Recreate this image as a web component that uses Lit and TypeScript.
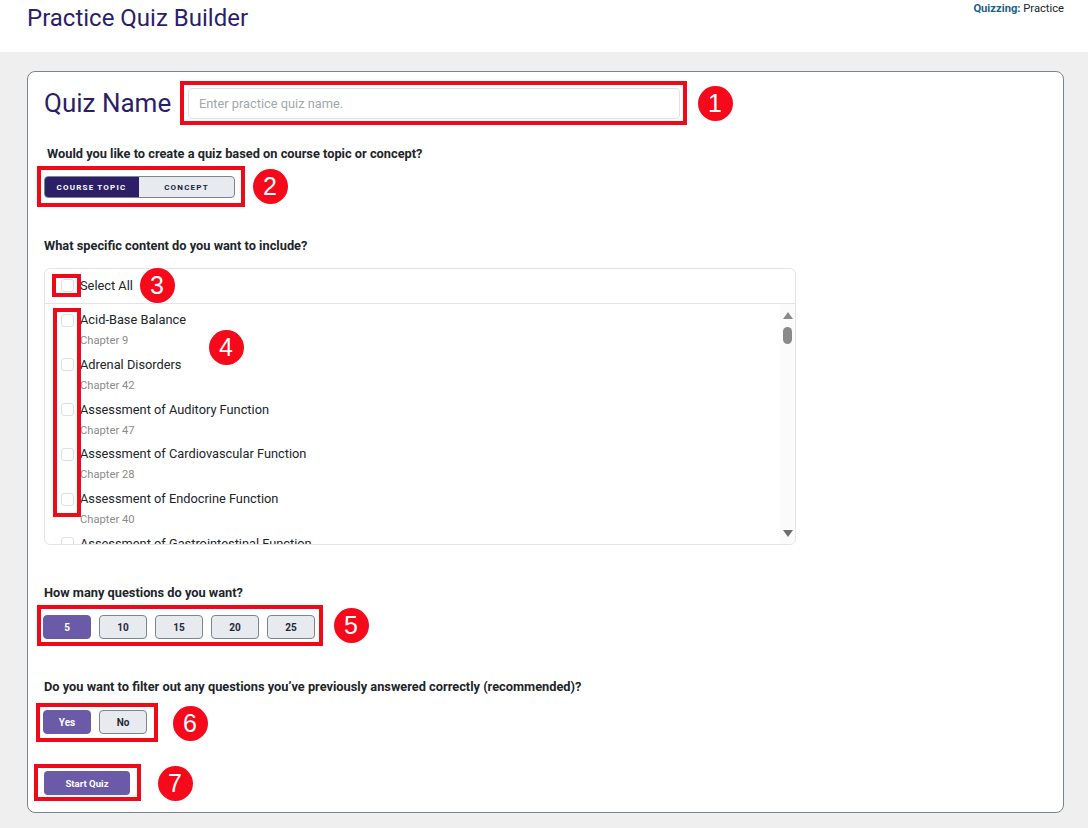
import { LitElement, html, css } from "lit";
import { customElement } from "lit/decorators.js";

const topics = [
  ["Acid-Base Balance", "Chapter 9"],
  ["Adrenal Disorders", "Chapter 42"],
  ["Assessment of Auditory Function", "Chapter 47"],
  ["Assessment of Cardiovascular Function", "Chapter 28"],
  ["Assessment of Endocrine Function", "Chapter 40"],
  ["Assessment of Gastrointestinal Function", "Chapter 24"],
];

const redBoxes = [
  [180, 81, 507, 44],
  [37, 166, 208, 41],
  [52, 274, 29, 23],
  [53, 308, 28, 209],
  [37, 605, 286, 41],
  [36, 703, 122, 39],
  [34, 764, 107, 37],
];

const badges = [
  ["1", 715, 103],
  ["2", 270, 186],
  ["3", 157, 285],
  ["4", 226, 347],
  ["5", 351, 625],
  ["6", 190, 723],
  ["7", 175, 783],
];

@customElement("app-root")
export class AppRoot extends LitElement {
  static styles = css`
    :host {
      display: block;
      position: relative;
      height: 828px;
      overflow: hidden;
      background: #efefef;
      font-family: Roboto, "Liberation Sans", sans-serif;
      color: #212529;
    }
    .header {
      height: 52px;
      background: #fff;
      display: flex;
      justify-content: space-between;
      padding: 0 24px 0 27px;
      box-sizing: border-box;
    }
    h1 {
      margin: 4px 0 0;
      font-size: 24px;
      line-height: 28px;
      font-weight: 400;
      color: #2c1f68;
    }
    .crumb {
      margin-top: 2px;
      font-size: 11.2px;
      line-height: 13px;
    }
    .crumb b {
      color: #1f5f8b;
      font-weight: 700;
    }
    .card {
      margin: 19px 24px 0 27px;
      height: 742px;
      box-sizing: border-box;
      background: #fff;
      border: 1px solid #7a858e;
      border-radius: 8px;
      padding: 0 16px;
    }
    .name-row {
      display: flex;
      align-items: center;
      height: 31px;
      margin-top: 16px;
    }
    h2 {
      margin: 0;
      width: 144px;
      font-size: 26px;
      line-height: 31px;
      font-weight: 400;
      color: #2c1f68;
    }
    .input {
      width: 492px;
      height: 31px;
      box-sizing: border-box;
      border: 1px solid #dee2e6;
      border-radius: 4px;
      padding: 0 10px;
      font-size: 12.8px;
      line-height: 29px;
      color: #a3a7ab;
    }
    .q {
      margin: 0;
      font-size: 12.8px;
      line-height: 14px;
      font-weight: 700;
      color: #212529;
    }
    .q1 {
      margin: 28px 0 0 3px;
    }
    .toggle {
      display: flex;
      width: 191px;
      height: 22px;
      margin-top: 15px;
      box-sizing: border-box;
      border-radius: 4px;
      overflow: hidden;
      border: 1px solid #7a858e;
      background: #e7eaef;
      font-size: 8px;
      font-weight: 700;
      letter-spacing: 1.2px;
    }
    .toggle span {
      display: flex;
      align-items: center;
      justify-content: center;
      color: #1b1f3a;
      flex: 1;
    }
    .toggle .on {
      flex: 0 0 95px;
      margin: -1px 0 -1px -1px;
      background: #2c1f68;
      color: #fff;
    }
    .q2 {
      margin-top: 41px;
    }
    .list {
      position: relative;
      width: 752px;
      height: 277px;
      margin-top: 15px;
      box-sizing: border-box;
      border: 1px solid #e1e4e8;
      border-radius: 6px;
      overflow: hidden;
    }
    .all {
      display: flex;
      align-items: center;
      height: 35px;
      box-sizing: border-box;
      border-bottom: 1px solid #e1e4e8;
      padding: 0 0 1px 16px;
      font-size: 12.8px;
    }
    .box {
      flex: none;
      width: 13px;
      height: 13px;
      margin-right: 6px;
      box-sizing: border-box;
      border: 1px solid #dcdfe4;
      border-radius: 3px;
      background: #fff;
    }
    .items {
      padding-top: 8px;
    }
    .item {
      height: 44.8px;
      padding-left: 16px;
      box-sizing: border-box;
    }
    .title {
      display: flex;
      align-items: center;
      height: 16px;
      font-size: 12.8px;
      line-height: 16px;
      white-space: nowrap;
    }
    .chapter {
      margin: 6px 0 0 19px;
      font-size: 11.2px;
      line-height: 13px;
      color: #8b8b8b;
    }
    .scroll {
      position: absolute;
      top: 35px;
      right: 0;
      bottom: 0;
      width: 15px;
      background: #fbfbfb;
      display: flex;
      flex-direction: column;
      align-items: center;
    }
    .up,
    .down {
      width: 0;
      height: 0;
      border-left: 5px solid transparent;
      border-right: 5px solid transparent;
    }
    .up {
      margin-top: 8px;
      border-bottom: 7px solid #8a8a8a;
    }
    .thumb {
      width: 9px;
      height: 17px;
      margin-top: 8px;
      border-radius: 5px;
      background: #8a8a8a;
    }
    .down {
      margin-top: auto;
      margin-bottom: 7px;
      border-top: 7px solid #6f6f6f;
    }
    .q3 {
      margin-top: 41px;
    }
    .btns {
      display: flex;
      gap: 8px;
      margin: 15px 0 0 -1px;
    }
    .btn {
      width: 48px;
      height: 24px;
      box-sizing: border-box;
      display: flex;
      align-items: center;
      justify-content: center;
      border: 1px solid #7a858e;
      border-radius: 4px;
      background: #e7eaef;
      color: #1f2937;
      font-size: 10px;
      font-weight: 700;
    }
    .btn.on,
    .start {
      border-color: #6a5aa8;
      background: #6a5aa8;
      color: #fff;
    }
    .q4 {
      margin-top: 41px;
    }
    .btns.two {
      margin-top: 16px;
    }
    .start {
      display: flex;
      align-items: center;
      justify-content: center;
      width: 86px;
      height: 24px;
      margin-top: 37px;
      border-radius: 4px;
      font-size: 9.6px;
      font-weight: 700;
    }
    .red {
      position: absolute;
      box-sizing: border-box;
      border: 4px solid #f00916;
    }
    .badge {
      position: absolute;
      width: 35px;
      height: 35px;
      margin: -17.5px 0 0 -17.5px;
      border-radius: 50%;
      background: #f5091a;
      color: #fff;
      font-family: "Liberation Sans", Arial, sans-serif;
      font-size: 25px;
      line-height: 35px;
      text-align: center;
    }
  `;

  render() {
    return html`
      <div class="header">
        <h1>Practice Quiz Builder</h1>
        <div class="crumb"><b>Quizzing:</b> Practice</div>
      </div>
      <div class="card">
        <div class="name-row">
          <h2>Quiz Name</h2>
          <div class="input">Enter practice quiz name.</div>
        </div>
        <p class="q q1">Would you like to create a quiz based on course topic or concept?</p>
        <div class="toggle"><span class="on">COURSE TOPIC</span><span>CONCEPT</span></div>
        <p class="q q2">What specific content do you want to include?</p>
        <div class="list">
          <div class="all"><span class="box"></span>Select All</div>
          <div class="items">
            ${topics.map(
              ([t, c]) => html`
                <div class="item">
                  <div class="title"><span class="box"></span>${t}</div>
                  <div class="chapter">${c}</div>
                </div>
              `
            )}
          </div>
          <div class="scroll">
            <div class="up"></div>
            <div class="thumb"></div>
            <div class="down"></div>
          </div>
        </div>
        <p class="q q3">How many questions do you want?</p>
        <div class="btns">
          ${["5", "10", "15", "20", "25"].map(
            (n, i) => html`<div class="btn ${i === 0 ? "on" : ""}">${n}</div>`
          )}
        </div>
        <p class="q q4">Do you want to filter out any questions you’ve previously answered correctly (recommended)?</p>
        <div class="btns two">
          <div class="btn on">Yes</div>
          <div class="btn">No</div>
        </div>
        <div class="start">Start Quiz</div>
      </div>
      ${redBoxes.map(
        ([x, y, w, h]) =>
          html`<div class="red" style="left:${x}px;top:${y}px;width:${w}px;height:${h}px"></div>`
      )}
      ${badges.map(
        ([n, x, y]) => html`<div class="badge" style="left:${x}px;top:${y}px">${n}</div>`
      )}
    `;
  }
}
